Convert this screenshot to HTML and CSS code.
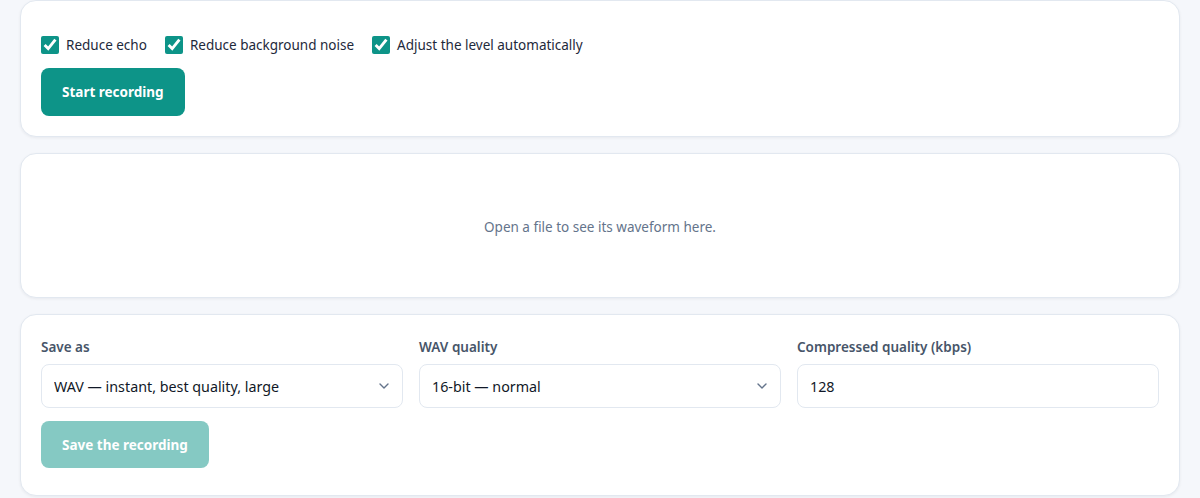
FILE: index.html
```html
<!DOCTYPE html>
<html lang="en">
<head>
  <meta charset="UTF-8" />
  <title>Recorder</title>
  <meta name="viewport" content="width=device-width, initial-scale=1.0"/>
  <link rel="stylesheet" href="styles.css">
</head>
<body>
  <div class="painel">
    <div class="opcoes">
      <label class="opcao"><input type="checkbox" checked> Reduce echo</label>
      <label class="opcao"><input type="checkbox" checked> Reduce background noise</label>
      <label class="opcao"><input type="checkbox" checked> Adjust the level automatically</label>
    </div>
    <button class="botao">Start recording</button>
  </div>

  <div class="painel onda">
    <p>Open a file to see its waveform here.</p>
  </div>

  <div class="painel salvar">
    <div class="campos">
      <div class="campo">
        <span class="rotulo">Save as</span>
        <div class="seletor">
          <select>
            <option>WAV — instant, best quality, large</option>
          </select>
          <svg class="seta" width="10" height="6" viewBox="0 0 10 6"><path d="M1 1l4 4 4-4" fill="none" stroke="#64748b" stroke-width="1.4" stroke-linecap="round" stroke-linejoin="round"/></svg>
        </div>
      </div>
      <div class="campo">
        <span class="rotulo">WAV quality</span>
        <div class="seletor">
          <select>
            <option>16-bit — normal</option>
          </select>
          <svg class="seta" width="10" height="6" viewBox="0 0 10 6"><path d="M1 1l4 4 4-4" fill="none" stroke="#64748b" stroke-width="1.4" stroke-linecap="round" stroke-linejoin="round"/></svg>
        </div>
      </div>
      <div class="campo">
        <span class="rotulo">Compressed quality (kbps)</span>
        <input class="entrada" type="number" value="128">
      </div>
    </div>
    <button class="botao" disabled>Save the recording</button>
  </div>
</body>
</html>
```

FILE: styles.css
```css
* {
  box-sizing: border-box;
}
body {
  font-family: "Noto Sans", "Open Sans", sans-serif;
  margin: 0;
  padding: 0 20px;
  background: #f5f7fb;
  color: #1e293b;
  font-size: 14px;
}
.painel {
  background: #fff;
  border: 1px solid #e2e8f0;
  border-radius: 16px;
  box-shadow: 0 1px 3px rgba(15,23,42,0.06);
  padding: 20px;
  margin-bottom: 16px;
}
.painel:first-child {
  padding-top: 34px;
}
.salvar {
  padding-top: 22px;
  padding-bottom: 27px;
}
.opcoes {
  display: flex;
  align-items: center;
  gap: 18px;
  height: 20px;
}
.opcao {
  display: flex;
  align-items: center;
  gap: 7px;
  font-size: 13.5px;
  color: #1e293b;
}
.opcao input {
  width: 18px;
  height: 18px;
  margin: 0;
  accent-color: #0d9488;
}
.botao {
  display: block;
  margin-top: 13px;
  height: 48px;
  padding: 0 21px;
  background: #0d9488;
  color: #fff;
  border: none;
  border-radius: 8px;
  font-family: inherit;
  font-size: 13.5px;
  font-weight: 700;
  cursor: pointer;
}
.botao:disabled {
  opacity: 0.5;
  height: 47px;
  cursor: default;
}
.onda {
  height: 145px;
  display: flex;
  align-items: center;
  justify-content: center;
}
.onda p {
  margin: 0;
  color: #64748b;
  font-size: 13.5px;
  position: relative;
  top: 1px;
}
.campos {
  display: grid;
  grid-template-columns: 1fr 1fr 1fr;
  gap: 16px;
}
.campo {
  display: flex;
  flex-direction: column;
  gap: 7px;
}
.rotulo {
  font-size: 13.5px;
  font-weight: 600;
  color: #475569;
  line-height: 20px;
}
.seletor {
  position: relative;
}
.seletor select, .entrada {
  width: 100%;
  height: 44px;
  padding: 0 12px;
  border: 1px solid #e2e8f0;
  border-radius: 8px;
  background: #fff;
  font-family: inherit;
  font-size: 14.3px;
  color: #111827;
  appearance: none;
  -webkit-appearance: none;
  outline: none;
}
.entrada::-webkit-inner-spin-button {
  -webkit-appearance: none;
}
.seta {
  position: absolute;
  right: 14px;
  top: 19px;
  pointer-events: none;
}
```
